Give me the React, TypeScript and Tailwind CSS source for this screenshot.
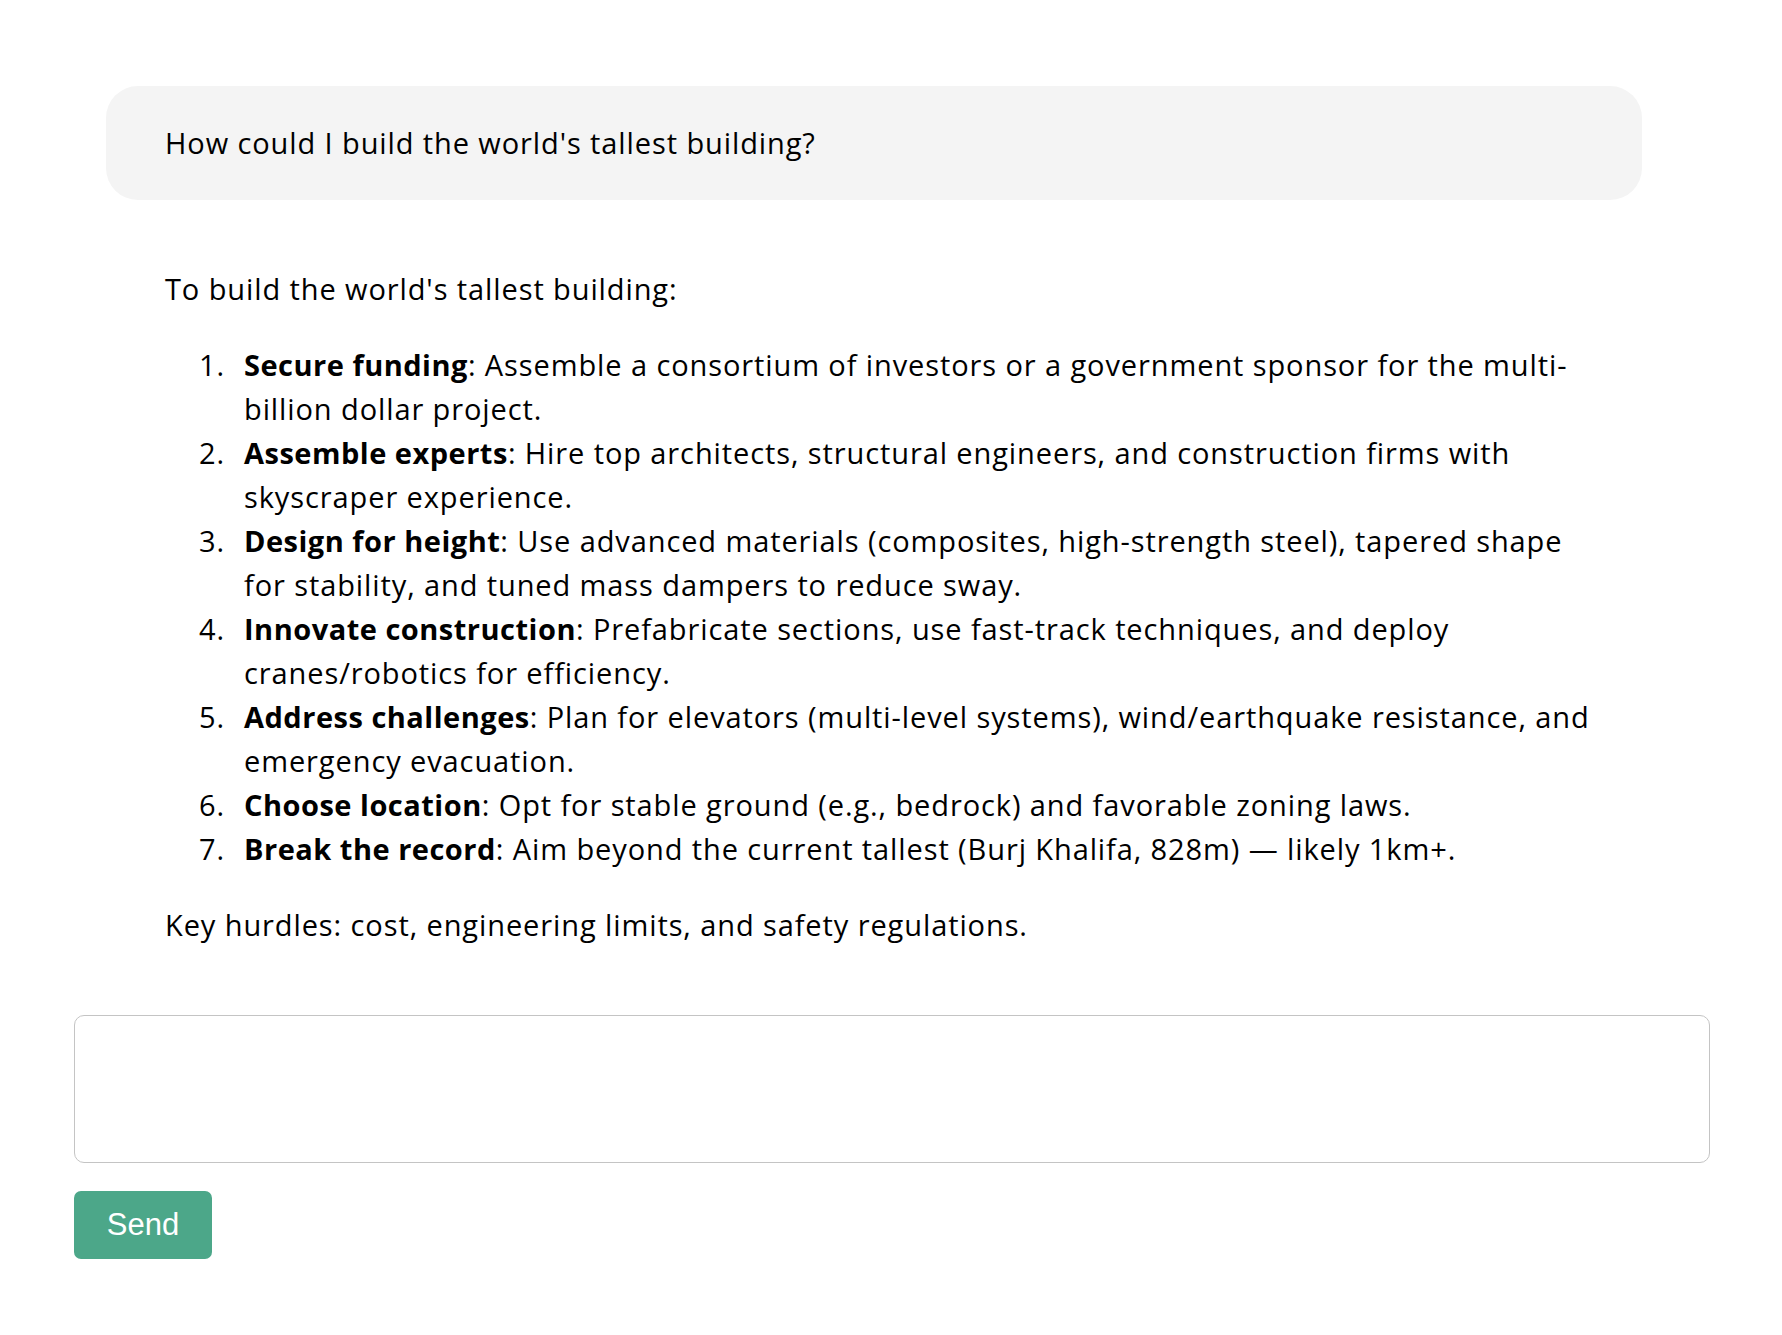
import React from "react";

const items: [string, string][] = [
  ["Secure funding", ": Assemble a consortium of investors or a government sponsor for the multi-billion dollar project."],
  ["Assemble experts", ": Hire top architects, structural engineers, and construction firms with skyscraper experience."],
  ["Design for height", ": Use advanced materials (composites, high-strength steel), tapered shape for stability, and tuned mass dampers to reduce sway."],
  ["Innovate construction", ": Prefabricate sections, use fast-track techniques, and deploy cranes/robotics for efficiency."],
  ["Address challenges", ": Plan for elevators (multi-level systems), wind/earthquake resistance, and emergency evacuation."],
  ["Choose location", ": Opt for stable ground (e.g., bedrock) and favorable zoning laws."],
  ["Break the record", ": Aim beyond the current tallest (Burj Khalifa, 828m) \u2014 likely 1km+."],
];

export default function App() {
  return (
    <div className="min-h-[1335px] bg-white px-[74px] pt-[86px] text-black">
      <div className="font-['Open_Sans',sans-serif] text-[29px] leading-[44px] tracking-[0.9px]">
        <div className="ml-[32px] w-[1536px] rounded-[32px] bg-[#f4f4f4] px-[59px] py-[35px]">
          How could I build the world's tallest building?
        </div>
        <div className="ml-[32px] w-[1536px] pl-[59px] pr-[45px] pt-[67px] pb-[68px]">
          <p>To build the world's tallest building:</p>
          <ol className="my-[32px] pl-[34px]">
            {items.map(([b, t], i) => (
              <li key={i} className="flex">
                <span className="w-[45px] shrink-0">{i + 1}.</span>
                <span className="min-w-0 flex-1">
                  <strong className="font-bold tracking-[0.5px]">{b}</strong>
                  {t}
                </span>
              </li>
            ))}
          </ol>
          <p>Key hurdles: cost, engineering limits, and safety regulations.</p>
        </div>
      </div>
      <textarea className="block h-[148px] w-[1636px] resize-none rounded-[10px] border border-[#c4c4c4] bg-white" />
      <button className="mt-[28px] flex h-[68px] w-[138px] items-center justify-center rounded-[7px] bg-[#4ca789] font-['Liberation_Sans',sans-serif] text-[31px] text-white">
        Send
      </button>
    </div>
  );
}
